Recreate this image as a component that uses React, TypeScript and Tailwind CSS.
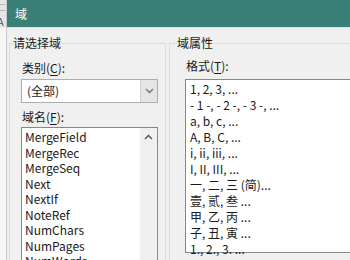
import React from "react";

const fieldNames = [
  "MergeField",
  "MergeRec",
  "MergeSeq",
  "Next",
  "NextIf",
  "NoteRef",
  "NumChars",
  "NumPages",
  "NumWords",
  "Page",
];

const formats = [
  "1, 2, 3, ...",
  "- 1 -, - 2 -, - 3 -, ...",
  "a, b, c, ...",
  "A, B, C, ...",
  "i, ii, iii, ...",
  "I, II, III, ...",
  "一, 二, 三 (简)...",
  "壹, 贰, 叁 ...",
  "甲, 乙, 丙 ...",
  "子, 丑, 寅 ...",
  "1., 2., 3. ...",
];

function Chevron({ up }: { up?: boolean }) {
  return (
    <svg width="9" height="6" viewBox="0 0 9 6" className="block">
      <path
        d={up ? "M1 5 L4.5 1.5 L8 5" : "M1 1 L4.5 4.5 L8 1"}
        fill="none"
        stroke={up ? "#505050" : "#707070"}
        strokeWidth="1.3"
      />
    </svg>
  );
}

export default function App() {
  return (
    <div className="w-[350px] h-[260px] overflow-hidden flex bg-[#f0f0f0] font-['Noto_Sans_CJK_SC',sans-serif] text-[12px] text-[#1a1a1a]">
      {/* window behind the dialog */}
      <div className="w-[7px] shrink-0 flex flex-col border-r border-[#c9c9c9]">
        <div className="h-[28px] bg-[#e6e6e6] overflow-hidden flex flex-col">
          <div className="h-px bg-[#b5b5b5] mt-[4px] w-[5px]" />
          <div className="h-px bg-[#b5b5b5] mt-[5px] w-[5px]" />
          <div className="-ml-[3px] mt-[4px] text-[11px] leading-[12px] text-[#555]">A</div>
        </div>
        <div className="flex-1 bg-[#f6f6f6]" />
      </div>

      {/* dialog */}
      <div className="flex-1 min-w-0 flex flex-col">
        <div className="h-[27px] shrink-0 bg-[#3b7f79] flex items-center pl-[8px] text-white">
          域
        </div>
        <div className="h-px shrink-0 bg-[#d3e6e3]" />

        <div className="flex pt-[7px] pl-[2px] gap-[3px]">
          {/* left group */}
          <fieldset className="w-[157px] h-[260px] shrink-0 border border-[#dcdcdc]">
            <legend className="ml-[3px] leading-[16px]">请选择域</legend>
            <div className="pl-[11px] pt-[9px] flex flex-col">
              <div className="ml-px leading-[16px]">
                类别(<span className="underline underline-offset-2">C</span>):
              </div>
              <div className="mt-[3px] w-[137px] h-[24px] flex border border-[#adadad] bg-white">
                <div className="flex-1 flex items-center pl-[5px]">(全部)</div>
                <div className="w-[17px] bg-[#e5e5e5] border-l border-[#cfcfcf] flex items-center justify-center">
                  <Chevron />
                </div>
              </div>
              <div className="mt-[6px] ml-px leading-[16px]">
                域名(<span className="underline underline-offset-2">F</span>):
              </div>
              <div className="mt-[2px] w-[137px] h-[200px] flex border border-[#828790] bg-white">
                <div className="flex-1 pl-[3px] pt-[1px]">
                  {fieldNames.map((n) => (
                    <div key={n} className="leading-[15.5px] h-[15.5px]">
                      {n}
                    </div>
                  ))}
                </div>
                <div className="w-[17px] bg-[#f0f0f0] flex flex-col">
                  <div className="h-[17px] flex items-center justify-center">
                    <Chevron up />
                  </div>
                </div>
              </div>
            </div>
          </fieldset>

          {/* right group */}
          <fieldset className="w-[200px] h-[260px] shrink-0 border border-[#dcdcdc]">
            <legend className="ml-[7px] leading-[16px]">域属性</legend>
            <div className="pl-[15px] pt-[7px] flex flex-col">
              <div className="ml-px leading-[16px]">
                格式(<span className="underline underline-offset-2">T</span>):
              </div>
              <div className="mt-[5px] w-[190px] h-[174px] border border-[#828790] bg-white pl-[4px] pt-[1px]">
                {formats.map((f) => (
                  <div key={f} className="leading-[16px] h-[16px] whitespace-nowrap">
                    {f}
                  </div>
                ))}
              </div>
            </div>
          </fieldset>
        </div>
      </div>
    </div>
  );
}
